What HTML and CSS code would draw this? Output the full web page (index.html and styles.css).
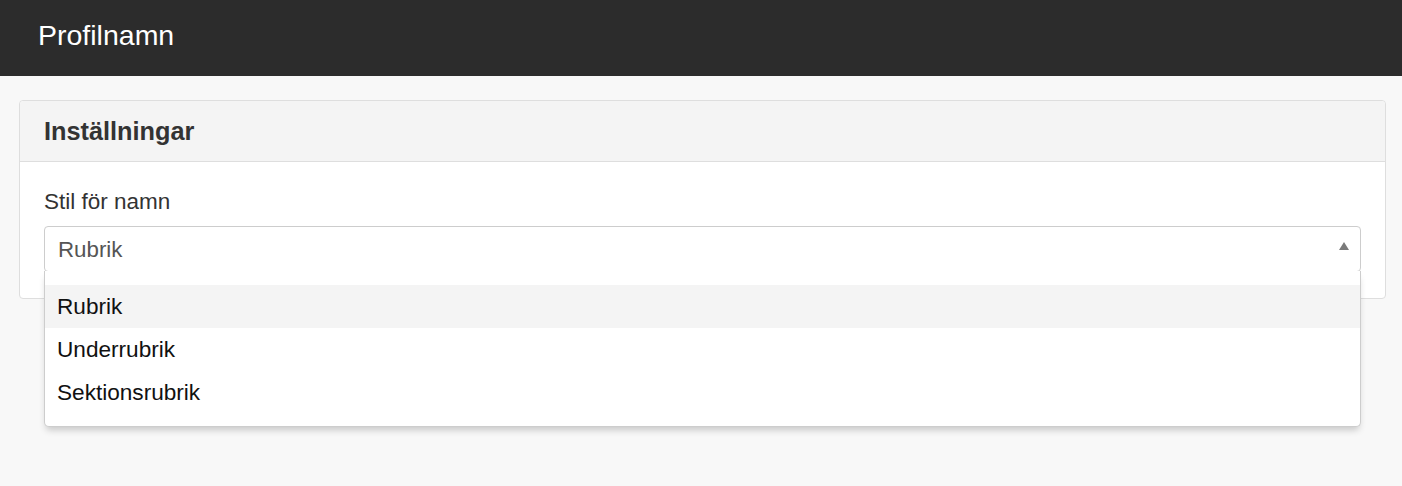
FILE: index.html
```html
<!DOCTYPE html>
<html lang="sv">
<head>
<meta charset="utf-8">
<title>Profilnamn</title>
<link rel="stylesheet" href="styles.css">
</head>
<body>
<header class="topbar">Profilnamn</header>
<main class="page">
  <section class="panel">
    <div class="panel-heading">Inställningar</div>
    <div class="panel-body">
      <label class="field-label">Stil för namn</label>
      <div class="combo">
        <span class="combo-value">Rubrik</span>
        <svg class="combo-arrow" width="10" height="8" viewBox="0 0 10 8"><polygon points="5,0 10,8 0,8" fill="#7a7a7a"/></svg>
        <ul class="combo-list">
          <li class="combo-option is-active">Rubrik</li>
          <li class="combo-option">Underrubrik</li>
          <li class="combo-option">Sektionsrubrik</li>
        </ul>
      </div>
    </div>
  </section>
</main>
</body>
</html>
```
FILE: styles.css
```css
html, body {
  margin: 0;
  padding: 0;
}
body {
  background: #f8f8f8;
  font-family: "Liberation Sans", Arial, Helvetica, sans-serif;
  color: #333;
  height: 486px;
  overflow: hidden;
}
.topbar {
  background: #2c2c2c;
  color: #fff;
  font-size: 28.5px;
  line-height: 70px;
  height: 70px;
  padding: 0 38px 6px;
}
.page {
  padding: 24px 16px 0 19px;
}
.panel {
  background: #fff;
  border: 1px solid #dedede;
  border-radius: 4px;
}
.panel-heading {
  background: #f4f4f4;
  border-bottom: 1px solid #dedede;
  border-radius: 4px 4px 0 0;
  height: 60px;
  line-height: 60px;
  padding: 0 24px;
  font-size: 25.3px;
  font-weight: bold;
  color: #333;
}
.panel-body {
  padding: 27px 24px 26px;
}
.field-label {
  display: block;
  font-size: 22.5px;
  line-height: 26px;
  color: #333;
  margin-bottom: 11px;
}
.combo {
  position: relative;
  border: 1px solid #cdcdcd;
  border-radius: 4px;
  height: 42px;
  padding: 2px 13px 0;
  background: #fff;
}
.combo-value {
  display: block;
  font-size: 22.3px;
  line-height: 42px;
  color: #555;
}
.combo-arrow {
  position: absolute;
  right: 11px;
  top: 15px;
}
.combo-list {
  position: absolute;
  left: -1px;
  right: -1px;
  top: 100%;
  margin: 0;
  padding: 14px 0 12px;
  list-style: none;
  background: #fff;
  border: 1px solid #cdcdcd;
  border-top: none;
  border-radius: 0 0 5px 5px;
  box-shadow: 0 5px 7px -2px rgba(0, 0, 0, 0.2);
  z-index: 2;
}
.combo-option {
  font-size: 22.6px;
  line-height: 43px;
  height: 43px;
  padding: 0 12px;
  color: #111;
}
.combo-option.is-active {
  background: #f4f4f4;
}
```
